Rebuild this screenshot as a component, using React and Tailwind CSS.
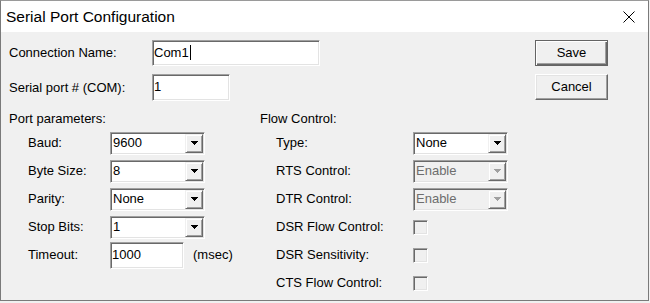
import React from 'react';

const sunken =
  'border border-t-[#a0a0a0] border-l-[#a0a0a0] border-r-white border-b-white shadow-[inset_1px_1px_0_#696969,inset_-1px_-1px_0_#e3e3e3]';

function Arrow({ disabled }) {
  const c = disabled ? '#a0a0a0' : '#000';
  return (
    <svg width="7" height="4" viewBox="0 0 7 4" shapeRendering="crispEdges">
      <rect x="0" y="0" width="7" height="1" fill={c} />
      <rect x="1" y="1" width="5" height="1" fill={c} />
      <rect x="2" y="2" width="3" height="1" fill={c} />
      <rect x="3" y="3" width="1" height="1" fill={c} />
    </svg>
  );
}

function Combo({ value, disabled }) {
  return (
    <div
      className={`w-[95px] h-[23px] flex ${sunken} ${disabled ? 'bg-[#f0f0f0] text-[#6d6d6d]' : 'bg-white'}`}
    >
      <div className="flex-1 flex items-center pl-[2px] pb-[2px] leading-[15px]">{value}</div>
      <div className="w-[18px] h-[19px] mt-[1px] mr-[1px] flex items-center justify-center bg-[#f0f0f0] border border-t-[#f0f0f0] border-l-[#f0f0f0] border-r-[#696969] border-b-[#696969] shadow-[inset_1px_1px_0_white,inset_-1px_-1px_0_#a0a0a0]">
        <Arrow disabled={disabled} />
      </div>
    </div>
  );
}

function TextBox({ value, width, height, caret }) {
  return (
    <div className={`${width} ${height} bg-white flex items-center pl-[1px] pb-[2px] leading-[15px] ${sunken}`}>
      <span>{value}</span>
      {caret && <span className="w-[1px] h-[15px] bg-black ml-[1px]" />}
    </div>
  );
}

function CheckBox() {
  return <div className={`w-[15px] h-[15px] bg-[#f0f0f0] ${sunken}`} />;
}

function Row({ label, labelWidth, children }) {
  return (
    <div className="h-[28px] flex items-center">
      <div className={labelWidth}>{label}</div>
      {children}
    </div>
  );
}

export default function App() {
  return (
    <div className="w-[650px] h-[303px] bg-[#f0f0f0] font-['Liberation_Sans',Arial,sans-serif] text-[13px] text-black">
      <div className="w-[649px] h-[301px] flex flex-col border border-[#7a7a7a] border-t-[#9a9a9a]">
        {/* title bar */}
        <div className="h-[31px] bg-white flex items-center justify-between pl-[5px] pr-[13px]">
          <span className="text-[15.5px] leading-none">Serial Port Configuration</span>
          <svg width="12" height="12" viewBox="0 0 12 12">
            <path d="M0.5 0.5 L11.5 11.5 M11.5 0.5 L0.5 11.5" stroke="#000" strokeWidth="1" />
          </svg>
        </div>

        <div className="flex-1 bg-[#f0f0f0] pt-[8px] pl-[8px] pr-[40px]">
          <div className="flex justify-between">
            <div className="flex flex-col gap-[8px]">
              <div className="h-[26px] flex items-center">
                <div className="w-[143px]">Connection Name:</div>
                <TextBox value="Com1" width="w-[168px]" height="h-[26px]" caret />
              </div>
              <div className="h-[27px] flex items-center">
                <div className="w-[143px]">Serial port # (COM):</div>
                <TextBox value="1" width="w-[78px]" height="h-[27px]" />
              </div>
            </div>
            <div className="flex flex-col gap-[8px]">
              <button className="w-[73px] h-[26px] bg-[#f0f0f0] border border-[#646464] shadow-[inset_1px_1px_0_white,inset_-1px_-1px_0_#696969,inset_-2px_-2px_0_#a0a0a0] leading-[15px] pb-[1px]">
                Save
              </button>
              <button className="w-[73px] h-[26px] bg-[#f0f0f0] border border-t-white border-l-white border-r-[#696969] border-b-[#696969] shadow-[inset_-1px_-1px_0_#a0a0a0,inset_1px_1px_0_#e3e3e3] leading-[15px] pb-[1px]">
                Cancel
              </button>
            </div>
          </div>

          <div className="flex mt-[10px]">
            <div className="w-[251px]">
              <div className="h-[15px] leading-[15px]">Port parameters:</div>
              <div className="mt-[3px] pl-[19px]">
                <Row label="Baud:" labelWidth="w-[82px]">
                  <Combo value="9600" />
                </Row>
                <Row label="Byte Size:" labelWidth="w-[82px]">
                  <Combo value="8" />
                </Row>
                <Row label="Parity:" labelWidth="w-[82px]">
                  <Combo value="None" />
                </Row>
                <Row label="Stop Bits:" labelWidth="w-[82px]">
                  <Combo value="1" />
                </Row>
                <Row label="Timeout:" labelWidth="w-[82px]">
                  <TextBox value="1000" width="w-[74px]" height="h-[27px]" />
                  <span className="ml-[9px]">(msec)</span>
                </Row>
              </div>
            </div>
            <div className="flex-1">
              <div className="h-[15px] leading-[15px]">Flow Control:</div>
              <div className="mt-[3px] pl-[16px]">
                <Row label="Type:" labelWidth="w-[137px]">
                  <Combo value="None" />
                </Row>
                <Row label="RTS Control:" labelWidth="w-[137px]">
                  <Combo value="Enable" disabled />
                </Row>
                <Row label="DTR Control:" labelWidth="w-[137px]">
                  <Combo value="Enable" disabled />
                </Row>
                <Row label="DSR Flow Control:" labelWidth="w-[137px]">
                  <CheckBox />
                </Row>
                <Row label="DSR Sensitivity:" labelWidth="w-[137px]">
                  <CheckBox />
                </Row>
                <Row label="CTS Flow Control:" labelWidth="w-[137px]">
                  <CheckBox />
                </Row>
              </div>
            </div>
          </div>
        </div>
      </div>
    </div>
  );
}
